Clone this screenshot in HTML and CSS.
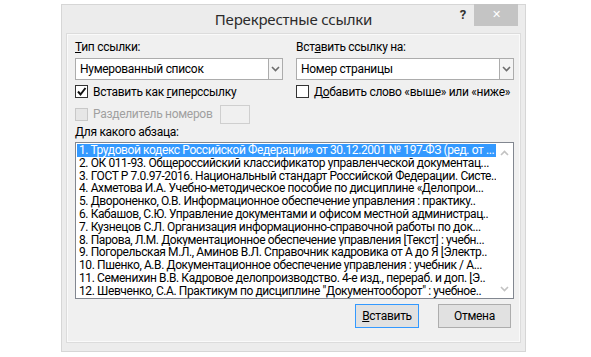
FILE: index.html
```html
<!DOCTYPE html>
<html lang="ru">
<head>
    <meta charset="UTF-8">
    <title>Перекрестные ссылки</title>
    <link rel="stylesheet" href="styles.css">
</head>
<body>
<div class="dialog">
    <!-- title bar -->
    <div class="titlebar">
        <span></span>
        <span class="title">Перекрестные ссылки</span>
        <div class="title-buttons">
            <span class="help">?</span>
            <span class="close">&#x2715;</span>
        </div>
    </div>

    <div class="panel">
        <div class="fields">
            <div class="field">
                <label><u>Т</u>ип ссылки:</label>
                <div class="select">
                    <span class="select-value">Нумерованный список</span>
                    <span class="select-arrow">
                        <svg width="9" height="6" viewBox="0 0 9 6"><path d="M1 1 L4.5 4.5 L8 1" fill="none" stroke="#6d6d6d" stroke-width="1.6"/></svg>
                    </span>
                </div>
                <div class="check">
                    <span class="box">
                        <svg width="11" height="11" viewBox="0 0 11 11"><path d="M2 5.5 L4.5 8.5 L9.5 2" fill="none" stroke="#111" stroke-width="2"/></svg>
                    </span>
                    <span>Вставить как <u>г</u>иперссылку</span>
                </div>
                <div class="check disabled">
                    <span class="box"></span>
                    <span>Разделитель номеров</span>
                    <span class="small-input"></span>
                </div>
            </div>
            <div class="field">
                <label>Вст<u>а</u>вить ссылку на:</label>
                <div class="select">
                    <span class="select-value">Номер страницы</span>
                    <span class="select-arrow">
                        <svg width="9" height="6" viewBox="0 0 9 6"><path d="M1 1 L4.5 4.5 L8 1" fill="none" stroke="#6d6d6d" stroke-width="1.6"/></svg>
                    </span>
                </div>
                <div class="check">
                    <span class="box"></span>
                    <span>Д<u>о</u>бавить слово «выше» или «ниже»</span>
                </div>
            </div>
        </div>

        <label class="list-label"><u>Д</u>ля какого абзаца:</label>
        <div class="listbox">
            <ul class="items">
                <li class="selected">1. Трудовой кодекс Российской Федерации» от 30.12.2001 № 197-ФЗ (ред. от ...</li>
                <li>2. ОК 011-93. Общероссийский классификатор управленческой документац...</li>
                <li>3. ГОСТ Р 7.0.97-2016. Национальный стандарт Российской Федерации. Систе..</li>
                <li>4. Ахметова И.А. Учебно-методическое пособие по дисциплине «Делопрои...</li>
                <li>5. Двороненко, О.В. Информационное обеспечение управления : практику..</li>
                <li>6. Кабашов, С.Ю. Управление документами и офисом местной администрац..</li>
                <li>7. Кузнецов С.Л. Организация информационно-справочной работы по док...</li>
                <li>8. Парова, Л.М. Документационное обеспечение управления [Текст] : учебн...</li>
                <li>9. Погорельская М.Л., Аминов В.Л. Справочник кадровика от А до Я [Электр..</li>
                <li>10. Пшенко, А.В. Документационное обеспечение управления : учебник / А...</li>
                <li>11. Семенихин В.В. Кадровое делопроизводство. 4-е изд., перераб. и доп. [Э..</li>
                <li>12. Шевченко, С.А. Практикум по дисциплине "Документооборот" : учебное..</li>
            </ul>
            <div class="scrollbar">
                <svg width="9" height="6" viewBox="0 0 9 6"><path d="M1 5 L4.5 1.5 L8 5" fill="none" stroke="#c2c2c2" stroke-width="1.6"/></svg>
                <svg width="9" height="6" viewBox="0 0 9 6"><path d="M1 1 L4.5 4.5 L8 1" fill="none" stroke="#c2c2c2" stroke-width="1.6"/></svg>
            </div>
        </div>

        <div class="buttons">
            <button class="default"><u>В</u>ставить</button>
            <button>Отмена</button>
        </div>
    </div>
</div>
</body>
</html>
```

FILE: styles.css
```css
/* page */
body {
    margin: 0;
    background-color: #fff;
    font-family: Roboto, "Noto Sans", sans-serif;
    font-size: 12px;
    letter-spacing: -0.3px;
    color: #000;
}

/* dialog window */
.dialog {
    margin: 4px 0 0 61px;
    width: 463px;
    height: 346px;
    background-color: #ececec;
    border: 1px solid #d6d6d6;
    display: flex;
    flex-direction: column;
}

.titlebar {
    height: 29px;
    display: grid;
    grid-template-columns: 1fr auto 1fr;
    align-items: start;
}

.title {
    font-family: "Noto Sans", sans-serif;
    font-size: 15px;
    color: #2b2b2b;
    line-height: 15px;
    padding-top: 7px;
    letter-spacing: -0.2px;
}

.title-buttons {
    justify-self: end;
    display: flex;
    align-items: flex-start;
    margin-right: 7px;
}

.help {
    font-weight: bold;
    font-size: 13px;
    color: #333;
    line-height: 13px;
    padding-top: 3px;
    margin-right: 8px;
}

.close {
    width: 44px;
    height: 22px;
    margin-top: -1px;
    background-color: #c4c4c4;
    color: #fff;
    font-size: 11px;
    line-height: 22px;
    text-align: center;
}

/* content panel */
.panel {
    flex: 1;
    margin: 0 5px 9px 5px;
    background-color: #f0f0f0;
    border: 1px solid #fafafa;
    box-shadow: 0 0 0 1px #dcdcdc;
    padding: 5px 5px 0 7px;
    display: flex;
    flex-direction: column;
}

.fields {
    display: grid;
    grid-template-columns: 208px 218px;
    column-gap: 13px;
}

.field label {
    display: block;
    line-height: 15px;
    margin-bottom: 3px;
}

.select {
    height: 20px;
    background-color: #fff;
    border: 1px solid #acacac;
    display: flex;
    align-items: stretch;
}

.select-value {
    flex: 1;
    line-height: 20px;
    padding-left: 4px;
}

.select-arrow {
    width: 13px;
    border-left: 1px solid #acacac;
    background-color: #f4f4f4;
    display: flex;
    align-items: center;
    justify-content: center;
}

.check {
    display: flex;
    align-items: center;
    margin-top: 4px;
    height: 15px;
    white-space: nowrap;
}

.box {
    width: 11px;
    height: 11px;
    border: 1px solid #333;
    background-color: #fff;
    margin-right: 5px;
    display: flex;
    align-items: center;
    justify-content: center;
    flex-shrink: 0;
}

.check.disabled {
    color: #a0a0a0;
    margin-top: 6px;
    height: 18px;
}

.check.disabled .box {
    border-color: #c8c8c8;
    background-color: #e6e6e6;
}

.small-input {
    width: 28px;
    height: 17px;
    margin-left: 8px;
    border: 1px solid #cfcfcf;
    background-color: #f0f0f0;
}

/* paragraph list */
.list-label {
    display: block;
    line-height: 15px;
    margin-top: 2px;
    margin-bottom: 2px;
}

.listbox {
    width: 437px;
    height: 155px;
    border: 1px solid #828790;
    background-color: #fff;
    display: flex;
}

.items {
    list-style: none;
    margin: 0;
    padding: 1px 0 0 1px;
    flex: 1;
    overflow: hidden;
    letter-spacing: -0.4px;
}

.items li {
    height: 12.8px;
    line-height: 12.8px;
    padding-left: 2px;
    white-space: nowrap;
    overflow: hidden;
}

.items li.selected {
    background-color: #3399ff;
    color: #fff;
}

.scrollbar {
    width: 17px;
    display: flex;
    flex-direction: column;
    justify-content: space-between;
    align-items: center;
    padding: 7px 0 6px 0;
}

/* buttons */
.buttons {
    display: flex;
    justify-content: flex-end;
    gap: 19px;
    margin-top: 5px;
    margin-right: 3px;
}

button {
    font-family: inherit;
    font-size: 12px;
    letter-spacing: inherit;
    height: 24px;
    background-color: #e1e1e1;
    border: 1px solid #adadad;
    padding: 0;
    width: 73px;
    color: #000;
}

button.default {
    width: 64px;
    border-color: #3399ff;
}
```
